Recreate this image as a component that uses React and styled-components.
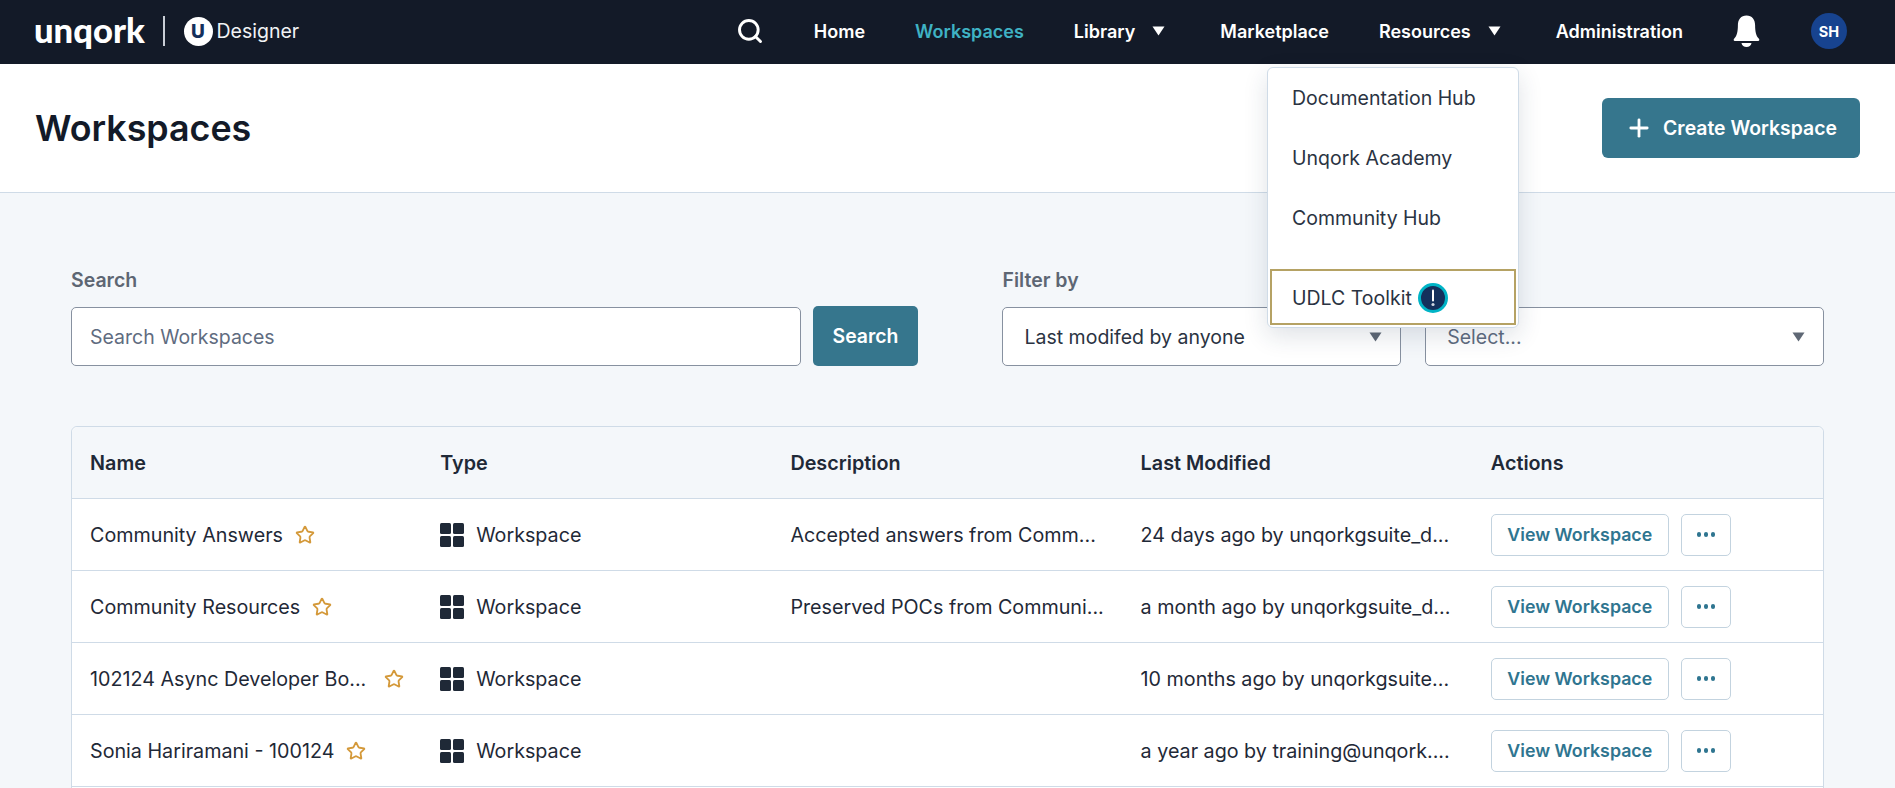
import React from "react";
import styled, { createGlobalStyle } from "styled-components";
import { Search as SearchIcon, Star, Plus } from "lucide-react";

const Global = createGlobalStyle`
  html, body { margin: 0; padding: 0; height: 100%; overflow: hidden; background: #f4f7fa; }
  * { box-sizing: border-box; }
  body { font-family: Inter, "Liberation Sans", sans-serif; color: #1f2937; }
`;

const Page = styled.div`
  height: 788px;
  overflow: hidden;
  position: relative;
  background: #f4f7fa;
`;

const TopBar = styled.header`
  height: 64px;
  background: #131a28;
  display: flex;
  align-items: center;
  justify-content: space-between;
  padding: 0 48px 2px 34px;
`;

const Brand = styled.div`
  display: flex;
  align-items: center;
  color: #fff;
`;

const Wordmark = styled.span`
  font-family: Lato, Inter, sans-serif;
  font-weight: 900;
  font-size: 34.6px;
  line-height: 32px;
  width: 113px;
  margin-top: -3px;
`;

const BrandDivider = styled.span`
  width: 1.5px;
  height: 30px;
  background: #c9ced6;
  margin: 0 19px 0 16px;
`;

const BrandBadge = styled.span`
  width: 29px;
  height: 29px;
  border-radius: 50%;
  background: #fff;
  color: #14305c;
  font-size: 19px;
  font-weight: 800;
  display: flex;
  align-items: center;
  justify-content: center;
  margin-right: 4px;
`;

const BrandLabel = styled.span`
  font-size: 19.5px;
  font-weight: 400;
  color: #f1f3f5;
`;

const Nav = styled.nav`
  display: flex;
  align-items: center;
  gap: 50px;
`;

const NavLink = styled.a`
  display: flex;
  align-items: center;
  gap: 17px;
  font-size: 18px;
  font-weight: 600;
  color: ${(p) => (p.$active ? "#3fb2c4" : "#fff")};
  white-space: nowrap;
`;

const Caret = styled.svg`
  display: block;
  flex: none;
  margin-right: ${(p) => p.$mr || 0}px;
`;

const Avatar = styled.span`
  width: 36px;
  height: 36px;
  border-radius: 50%;
  background: #17438f;
  color: #fff;
  font-size: 14.5px;
  font-weight: 700;
  display: flex;
  align-items: center;
  justify-content: center;
  margin-left: 1px;
`;

const HeaderBand = styled.section`
  height: 129px;
  background: #fff;
  border-bottom: 1px solid #cfdbe7;
  display: flex;
  align-items: center;
  justify-content: space-between;
  padding: 0 35px;
`;

const Title = styled.h1`
  margin: 0;
  font-size: 35.8px;
  font-weight: 600;
  color: #131a28;
`;

const PrimaryButton = styled.button`
  height: 60px;
  width: 258px;
  border: 0;
  border-radius: 6px;
  background: #36768d;
  color: #fff;
  font: 600 19.4px Inter, sans-serif;
  display: flex;
  align-items: center;
  justify-content: center;
  gap: 10px;
`;

const Main = styled.main`
  padding: 76px 71px 0 71px;
`;

const Filters = styled.div`
  display: flex;
  align-items: flex-end;
  height: 97px;
`;

const Field = styled.div`
  display: flex;
  flex-direction: column;
  gap: 16px;
  width: ${(p) => p.$w}px;
  margin-left: ${(p) => p.$ml || 0}px;
`;

const FieldLabel = styled.label`
  font-size: 19.5px;
  font-weight: 600;
  color: #5d6673;
  line-height: 22px;
  min-height: 22px;
`;

const TextInput = styled.div`
  height: 59px;
  background: #fff;
  border: 1px solid #8791a0;
  border-radius: 5px;
  display: flex;
  align-items: center;
  justify-content: space-between;
  padding: 0 18px 0 ${(p) => p.$pl || 18}px;
  font-size: 19.5px;
  color: ${(p) => p.$color || "#5f6c80"};
  white-space: nowrap;
`;

const SearchButton = styled.button`
  height: 60px;
  width: 106px;
  margin-left: 12px;
  border: 0;
  border-radius: 5px;
  background: #36768d;
  color: #fff;
  font: 600 19.4px Inter, sans-serif;
`;

const Table = styled.div`
  margin-top: 60px;
  border: 1px solid #cfdbe7;
  border-radius: 6px 6px 0 0;
  background: #fff;
  width: 1753px;
`;

const HeadRow = styled.div`
  display: grid;
  grid-template-columns: repeat(5, 1fr);
  height: 72px;
  background: #f4f7fa;
  border-bottom: 1px solid #cfdbe7;
  border-radius: 6px 6px 0 0;
  align-items: center;
`;

const Row = styled.div`
  display: grid;
  grid-template-columns: repeat(5, 1fr);
  height: 72px;
  border-bottom: 1px solid #cfdbe7;
  align-items: center;
`;

const HeadCell = styled.div`
  padding-left: 18px;
  font-size: 19.8px;
  font-weight: 600;
  color: #1f2937;
`;

const Cell = styled.div`
  padding-left: 18px;
  font-size: 19.72px;
  color: #1f2937;
  white-space: nowrap;
  display: flex;
  align-items: center;
`;

const TypeIcon = styled.svg`
  display: block;
  margin-right: 12px;
  flex: none;
`;

const StarMark = styled(Star)`
  margin-left: ${(p) => p.$gap}px;
  flex: none;
`;

const OutlineButton = styled.button`
  height: 42px;
  width: ${(p) => p.$w}px;
  margin-right: 12px;
  background: #fff;
  border: 1px solid #c3d3df;
  border-radius: 5px;
  color: #2f7590;
  font: 600 17.8px Inter, sans-serif;
  display: flex;
  align-items: center;
  justify-content: center;
  gap: 2.5px;
  padding: 0;
`;

const Dot = styled.span`
  width: 4.5px;
  height: 4.5px;
  border-radius: 50%;
  background: #2f7590;
`;

const Menu = styled.div`
  position: absolute;
  left: 1267px;
  top: 67px;
  width: 252px;
  height: 261px;
  background: #fff;
  border: 1px solid #cfdbe7;
  border-radius: 6px;
  box-shadow: 0 8px 24px rgba(30, 50, 80, 0.14);
  padding: 0 2px 2px;
  display: flex;
  flex-direction: column;
`;

const MenuItem = styled.a`
  height: 60px;
  padding-left: 22px;
  display: flex;
  align-items: center;
  font-size: 19.5px;
  color: #2a3342;
  flex: none;
`;

const FocusItem = styled(MenuItem)`
  height: 56px;
  margin-top: 21px;
  padding: 2px 0 0 20px;
  border: 2px solid #b5a264;
  gap: 6px;
`;

const Rows = [
  ["Community Answers", 12, "Accepted answers from Comm...", "24 days ago by unqorkgsuite_d..."],
  ["Community Resources", 12, "Preserved POCs from Communi...", "a month ago by unqorkgsuite_d..."],
  ["102124 Async Developer Bo...", 18, "", "10 months ago by unqorkgsuite..."],
  ["Sonia Hariramani - 100124", 12, "", "a year ago by training@unqork...."],
];

const Triangle = ({ color = "#fff", mr }) => (
  <Caret $mr={mr} width={13} height={10} viewBox="0 0 13 10">
    <path d="M0.5 0.5h12L6.5 9.5z" fill={color} />
  </Caret>
);

const Bell = () => (
  <svg width="27" height="33" viewBox="0 0 27 33" fill="#fff">
    <path d="M13.5 0.5c-5.6 0-8.6 4.2-8.6 9.6 0 6.8-1.1 11-3.4 13.2-1.1 1-1.3 2.7 0.5 2.7h23c1.8 0 1.6-1.7 0.5-2.7-2.3-2.2-3.4-6.4-3.4-13.2 0-5.4-3-9.6-8.6-9.6z" />
    <path d="M8.5 28h10c-0.4 2.4-2.4 4-5 4s-4.6-1.6-5-4z" />
  </svg>
);

const Grid4 = () => (
  <TypeIcon width="24" height="24" viewBox="0 0 24 24" fill="#1f2937">
    <rect x="0" y="0" width="11" height="11" rx="1.5" />
    <rect x="13" y="0" width="11" height="11" rx="1.5" />
    <rect x="0" y="13" width="11" height="11" rx="1.5" />
    <rect x="13" y="13" width="11" height="11" rx="1.5" />
  </TypeIcon>
);

const Alert = () => (
  <svg width="30" height="30" viewBox="0 0 30 30">
    <circle cx="15" cy="15" r="13.5" fill="#14305c" stroke="#00b4c6" strokeWidth="3" />
    <path d="M15 7.5v10" stroke="#fff" strokeWidth="2" strokeLinecap="round" />
    <circle cx="15" cy="21.5" r="1.6" fill="#cfd6e2" />
  </svg>
);

export default function App() {
  return (
    <Page>
      <Global />
      <TopBar>
        <Brand>
          <Wordmark>unqork</Wordmark>
          <BrandDivider />
          <BrandBadge>U</BrandBadge>
          <BrandLabel>Designer</BrandLabel>
        </Brand>
        <Nav>
          <SearchIcon size={28} color="#fff" strokeWidth={2.5} />
          <NavLink>Home</NavLink>
          <NavLink $active>Workspaces</NavLink>
          <NavLink>Library<Triangle mr={5} /></NavLink>
          <NavLink>Marketplace</NavLink>
          <NavLink>Resources<Triangle mr={5} /></NavLink>
          <NavLink>Administration</NavLink>
          <Bell />
          <Avatar>SH</Avatar>
        </Nav>
      </TopBar>
      <HeaderBand>
        <Title>Workspaces</Title>
        <PrimaryButton><Plus size={28} strokeWidth={2.4} />Create Workspace</PrimaryButton>
      </HeaderBand>
      <Main>
        <Filters>
          <Field $w={730}>
            <FieldLabel>Search</FieldLabel>
            <TextInput>Search Workspaces</TextInput>
          </Field>
          <SearchButton>Search</SearchButton>
          <Field $w={399} $ml={84}>
            <FieldLabel>Filter by</FieldLabel>
            <TextInput $pl={21} $color="#2a3342">Last modifed by anyone<Triangle color="#5f6875" /></TextInput>
          </Field>
          <Field $w={399} $ml={24}>
            <FieldLabel />
            <TextInput $pl={21}>Select...<Triangle color="#5f6875" /></TextInput>
          </Field>
        </Filters>
        <Table>
          <HeadRow>
            {["Name", "Type", "Description", "Last Modified", "Actions"].map((h) => (
              <HeadCell key={h}>{h}</HeadCell>
            ))}
          </HeadRow>
          {Rows.map(([name, gap, desc, mod]) => (
            <Row key={name}>
              <Cell>{name}<StarMark $gap={gap} size={20} color="#d4993a" strokeWidth={2.2} /></Cell>
              <Cell><Grid4 />Workspace</Cell>
              <Cell>{desc}</Cell>
              <Cell>{mod}</Cell>
              <Cell>
                <OutlineButton $w={178}>View Workspace</OutlineButton>
                <OutlineButton $w={50}><Dot /><Dot /><Dot /></OutlineButton>
              </Cell>
            </Row>
          ))}
          <Row />
        </Table>
      </Main>
      <Menu>
        <MenuItem>Documentation Hub</MenuItem>
        <MenuItem>Unqork Academy</MenuItem>
        <MenuItem>Community Hub</MenuItem>
        <FocusItem>UDLC Toolkit<Alert /></FocusItem>
      </Menu>
    </Page>
  );
}
